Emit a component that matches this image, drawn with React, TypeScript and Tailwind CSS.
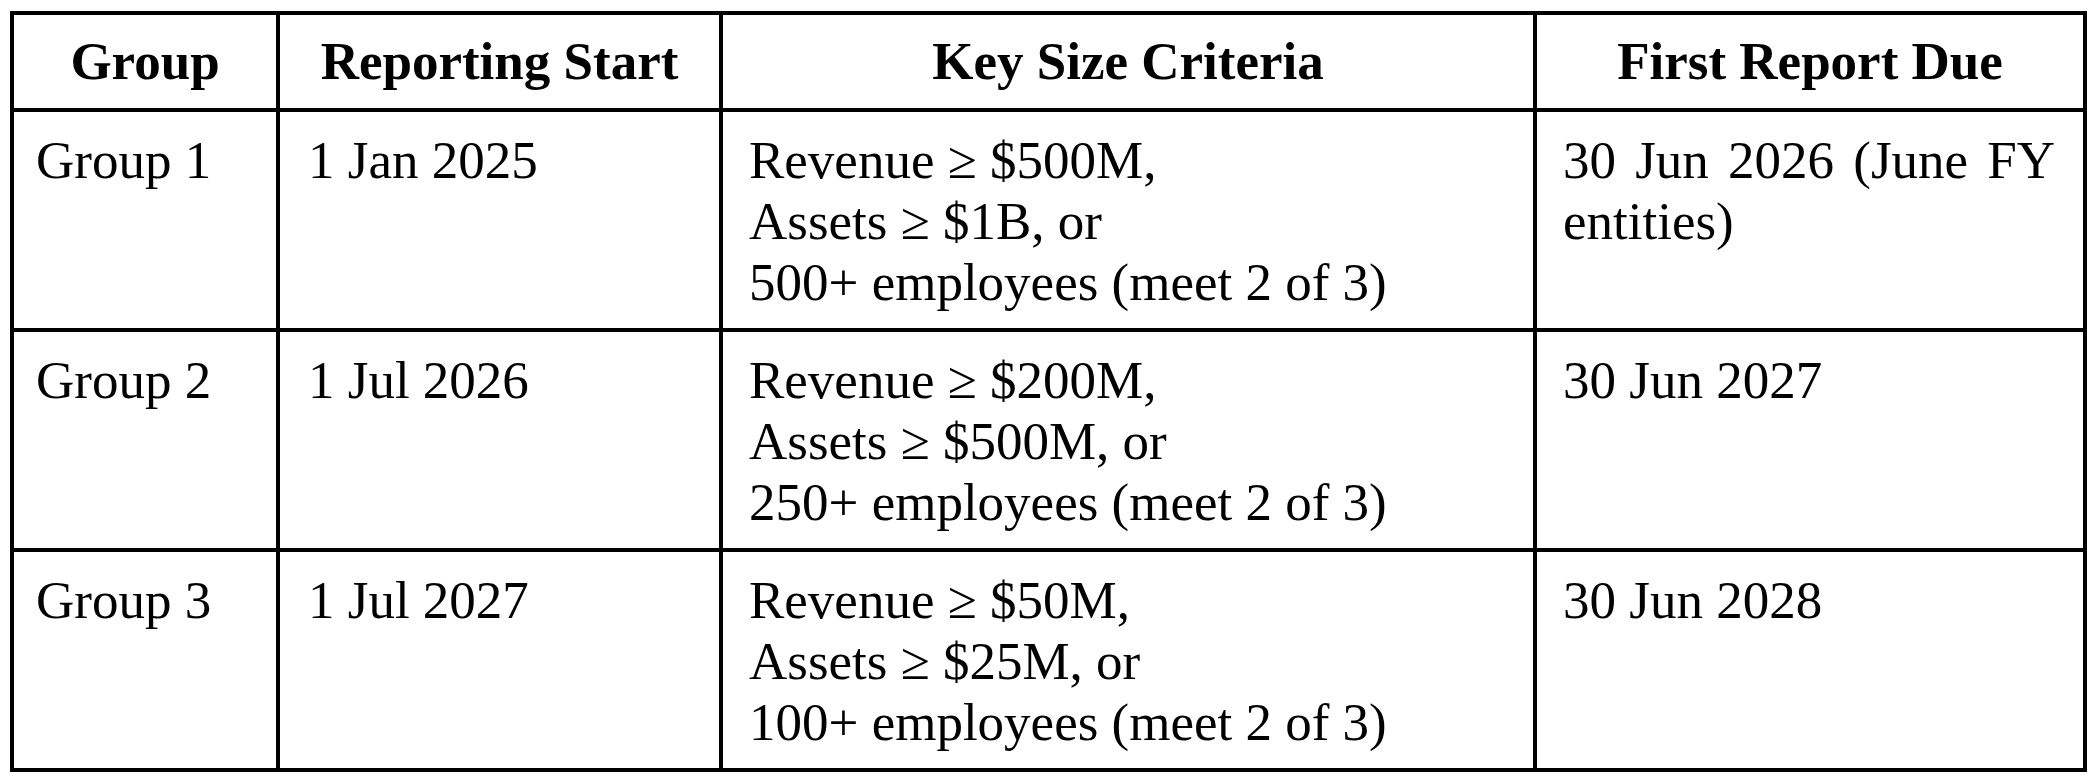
const rows = [
  {
    group: "Group 1",
    start: "1 Jan 2025",
    criteria: ["Revenue ≥ $500M,", "Assets ≥ $1B, or", "500+ employees (meet 2 of 3)"],
    due: "30 Jun 2026 (June FY entities)",
  },
  {
    group: "Group 2",
    start: "1 Jul 2026",
    criteria: ["Revenue ≥ $200M,", "Assets ≥ $500M, or", "250+ employees (meet 2 of 3)"],
    due: "30 Jun 2027",
  },
  {
    group: "Group 3",
    start: "1 Jul 2027",
    criteria: ["Revenue ≥ $50M,", "Assets ≥ $25M, or", "100+ employees (meet 2 of 3)"],
    due: "30 Jun 2028",
  },
];

export default function App() {
  return (
    <div className="w-[2092px] h-[782px] bg-white pt-[11px] pl-[10px] font-['Liberation_Serif','Times_New_Roman',serif] text-black">
      <table className="w-[2073px] table-fixed border-collapse border-[4px] border-black text-[53px] leading-[61px]">
        <colgroup>
          <col className="w-[266px]" />
          <col className="w-[443px]" />
          <col className="w-[814px]" />
          <col className="w-[550px]" />
        </colgroup>
        <thead>
          <tr>
            {["Group", "Reporting Start", "Key Size Criteria", "First Report Due"].map((h) => (
              <th key={h} className="border-[4px] border-black py-[16px] px-[10px] text-center font-bold">
                {h}
              </th>
            ))}
          </tr>
        </thead>
        <tbody>
          {rows.map((r) => (
            <tr key={r.group}>
              <td className="border-[4px] border-black align-top pt-[18px] pb-[15px] pl-[22px] pr-[20px]">{r.group}</td>
              <td className="border-[4px] border-black align-top pt-[18px] pb-[15px] pl-[28px] pr-[20px]">{r.start}</td>
              <td className="border-[4px] border-black align-top pt-[18px] pb-[15px] pl-[26px] pr-[20px]">
                {r.criteria.map((c) => (
                  <div key={c}>{c}</div>
                ))}
              </td>
              <td className="border-[4px] border-black align-top pt-[18px] pb-[15px] pl-[26px] pr-[28px] text-justify">{r.due}</td>
            </tr>
          ))}
        </tbody>
      </table>
    </div>
  );
}
